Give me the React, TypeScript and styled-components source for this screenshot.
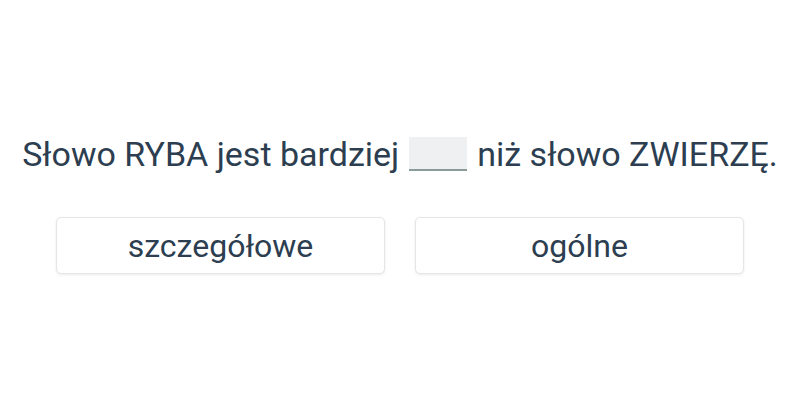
import React from 'react';
import styled, { createGlobalStyle } from 'styled-components';

const GlobalStyle = createGlobalStyle`
  html, body {
    margin: 0;
    padding: 0;
    background: #ffffff;
  }
  body {
    font-family: Roboto, "Noto Sans", sans-serif;
    color: #2c3e50;
  }
`;

const Page = styled.div`
  width: 800px;
  height: 400px;
  display: flex;
  flex-direction: column;
  align-items: center;
  padding-top: 137px;
  box-sizing: border-box;
`;

const Sentence = styled.div`
  display: flex;
  align-items: center;
  font-size: 34px;
  line-height: 34px;
  white-space: nowrap;
`;

const Blank = styled.span`
  display: inline-block;
  width: 58px;
  height: 32px;
  margin: 0 10px;
  background: #eef0f2;
  border-bottom: 2px solid #8a9b9c;
`;

const Options = styled.div`
  display: flex;
  gap: 30px;
  margin-top: 46px;
`;

const Option = styled.button`
  width: 329px;
  height: 57px;
  box-sizing: border-box;
  background: #ffffff;
  border: 1px solid #e3e5e8;
  border-radius: 5px;
  box-shadow: 0 1px 3px rgba(0, 0, 0, 0.08);
  font-family: Roboto, "Noto Sans", sans-serif;
  font-size: 32px;
  color: #2c3e50;
  cursor: pointer;
  padding: 0;
`;

export default function App() {
  return (
    <>
      <GlobalStyle />
      <Page>
        <Sentence>
          Słowo RYBA jest bardziej<Blank />niż słowo ZWIERZĘ.
        </Sentence>
        <Options>
          <Option>szczegółowe</Option>
          <Option>ogólne</Option>
        </Options>
      </Page>
    </>
  );
}
